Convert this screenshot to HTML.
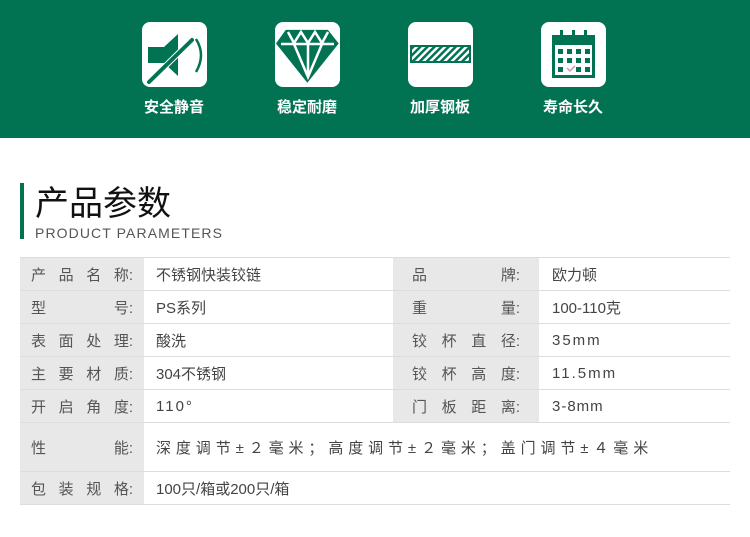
<!DOCTYPE html><html><head><meta charset="utf-8"><style>
body{margin:0;width:750px;height:537px;background:#fff;font-family:"Liberation Sans","Noto Sans CJK SC",sans-serif;position:relative;overflow:hidden}
.top{position:absolute;left:0;top:0;width:750px;height:138px;background:#017353}
.ic{position:absolute;top:22px;width:65px;height:65px;background:#fff;border-radius:8px}
.lb{position:absolute;top:96px;width:100px;text-align:center;color:#fff;font-size:15px;font-weight:bold}
.bar{position:absolute;left:20px;top:183px;width:4px;height:56px;background:#017353}
.t1{position:absolute;left:35px;top:176px;font-size:34px;color:#111}
.t2{position:absolute;left:35px;top:225px;font-size:14px;color:#555;letter-spacing:1.1px}
.row{position:absolute;left:20px;width:710px;border-bottom:1px solid #ddd;font-size:15px;color:#444}
.c{position:absolute;top:0;bottom:0;display:flex;align-items:center}
.g{background:#e8e8e8;justify-content:space-between;padding:0 11px;box-sizing:border-box;color:#555}
.r{padding:0 19px}
</style></head><body>
<div class="top"></div>
<div class="ic" style="left:142px"><svg width="65" height="65"><path d="M6 25h16l14-13v42L22 41H6z" fill="#017353"/><path d="M5 62L52 16" stroke="#fff" stroke-width="6"/><path d="M7 60L50 18" stroke="#017353" stroke-width="4" stroke-linecap="round"/><path d="M54 17q10 16 0 33" stroke="#017353" stroke-width="2.5" fill="none"/></svg></div>
<div class="ic" style="left:275px"><svg width="65" height="65"><path d="M11 9h43l11 14-32 40L1 23z" fill="#017353" transform="translate(0,-1) scale(0.98)"/><path d="M6 22h53M13 10l6 11 7-11 7 11 7-11 7 11 6-11M19 22l14 33 14-33M33 22v33" stroke="#fff" stroke-width="2.5" fill="none"/></svg></div>
<div class="ic" style="left:408px"><svg width="65" height="65"><defs><pattern id="h" width="5" height="5" patternUnits="userSpaceOnUse" patternTransform="rotate(45)"><rect width="2.5" height="5" fill="#017353"/></pattern></defs><rect x="3" y="24" width="59" height="16" fill="#fff" stroke="#017353" stroke-width="2"/><rect x="4" y="25" width="57" height="14" fill="url(#h)"/></svg></div>
<div class="ic" style="left:541px"><svg width="65" height="65" fill="#017353"><rect x="11" y="13" width="43" height="43"/><rect x="14" y="23" width="37" height="30" fill="#fff"/><rect x="19" y="8" width="3" height="10"/><rect x="31" y="8" width="3" height="10"/><rect x="43" y="8" width="3" height="10"/><rect x="17" y="27" width="5" height="5"/><rect x="26" y="27" width="5" height="5"/><rect x="35" y="27" width="5" height="5"/><rect x="44" y="27" width="5" height="5"/><rect x="17" y="36" width="5" height="5"/><rect x="26" y="36" width="5" height="5"/><rect x="35" y="36" width="5" height="5"/><rect x="44" y="36" width="5" height="5"/><rect x="17" y="45" width="5" height="5"/><path d="M26 46l3 3 5-5" stroke="#c9a" fill="none" stroke-width="1.5"/><rect x="35" y="45" width="5" height="5"/><rect x="44" y="45" width="5" height="5"/></svg></div>
<div class="lb" style="left:124px">安全静音</div><div class="lb" style="left:257px">稳定耐磨</div><div class="lb" style="left:390px">加厚钢板</div><div class="lb" style="left:523px">寿命长久</div>
<div class="bar"></div><div class="t1">产品参数</div><div class="t2">PRODUCT PARAMETERS</div>
<div style="position:absolute;left:20px;top:257px;width:710px;border-top:1px solid #ddd"></div>
<div class="row" style="top:258px;height:32px"><div class="c g" style="left:0;width:124px"><span>产</span><span>品</span><span>名</span><span>称:</span></div><div class="c" style="left:136px">不锈钢快装铰链</div><div class="c g r" style="left:373px;width:146px"><span>品</span><span>牌:</span></div><div class="c" style="left:532px">欧力顿</div></div>
<div class="row" style="top:291px;height:32px"><div class="c g" style="left:0;width:124px"><span>型</span><span>号:</span></div><div class="c" style="left:136px">PS系列</div><div class="c g r" style="left:373px;width:146px"><span>重</span><span>量:</span></div><div class="c" style="left:532px">100-110克</div></div>
<div class="row" style="top:324px;height:32px"><div class="c g" style="left:0;width:124px"><span>表</span><span>面</span><span>处</span><span>理:</span></div><div class="c" style="left:136px">酸洗</div><div class="c g r" style="left:373px;width:146px"><span>铰</span><span>杯</span><span>直</span><span>径:</span></div><div class="c" style="left:532px;letter-spacing:2px">35mm</div></div>
<div class="row" style="top:357px;height:32px"><div class="c g" style="left:0;width:124px"><span>主</span><span>要</span><span>材</span><span>质:</span></div><div class="c" style="left:136px">304不锈钢</div><div class="c g r" style="left:373px;width:146px"><span>铰</span><span>杯</span><span>高</span><span>度:</span></div><div class="c" style="left:532px;letter-spacing:2px">11.5mm</div></div>
<div class="row" style="top:390px;height:32px"><div class="c g" style="left:0;width:124px"><span>开</span><span>启</span><span>角</span><span>度:</span></div><div class="c" style="left:136px;letter-spacing:2px">110°</div><div class="c g r" style="left:373px;width:146px"><span>门</span><span>板</span><span>距</span><span>离:</span></div><div class="c" style="left:532px;letter-spacing:1px">3-8mm</div></div>
<div class="row" style="top:423px;height:48px"><div class="c g" style="left:0;width:124px"><span>性</span><span>能:</span></div><div class="c" style="left:136px;letter-spacing:4.9px;white-space:nowrap">深度调节±２毫米；高度调节±２毫米；盖门调节±４毫米</div></div>
<div class="row" style="top:472px;height:32px"><div class="c g" style="left:0;width:124px"><span>包</span><span>装</span><span>规</span><span>格:</span></div><div class="c" style="left:136px">100只/箱或200只/箱</div></div>
</body></html>
